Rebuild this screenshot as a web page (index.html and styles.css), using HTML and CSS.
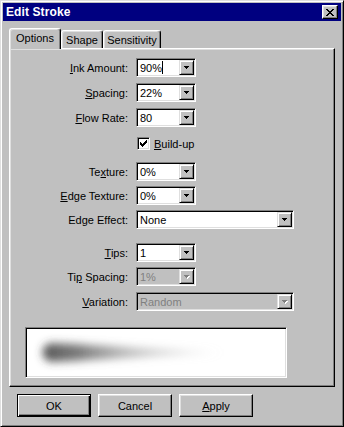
FILE: index.html
```html
<!DOCTYPE html>
<html>
<head>
<meta charset="utf-8">
<link rel="stylesheet" href="styles.css">
</head>
<body>
<div class="window">
  <div class="titlebar">
    <span class="title">Edit Stroke</span>
    <span class="close-btn">
      <svg width="8" height="7" viewBox="0 0 8 7" shape-rendering="crispEdges"><path d="M0 0h2v1H0zM6 0h2v1H6zM1 1h2v1H1zM5 1h2v1H5zM2 2h4v1H2zM3 3h2v1H3zM2 4h4v1H2zM1 5h2v1H1zM5 5h2v1H5zM0 6h2v1H0zM6 6h2v1H6z" fill="#000"/></svg>
    </span>
  </div>
  <div class="content">
    <div class="tabs">
      <div class="tab active tab-options">Options</div>
      <div class="tab tab-shape">Shape</div>
      <div class="tab tab-sens">Sensitivity</div>
    </div>
    <div class="panel">
      <div class="row">
        <label class="lbl"><u>I</u>nk Amount:</label>
        <div class="combo small"><span class="field">90%<span class="caret"></span></span><span class="drop"><svg class="arrow" width="5" height="3" viewBox="0 0 5 3" shape-rendering="crispEdges"><path d="M0 0h5v1H0zM1 1h3v1H1zM2 2h1v1H2z" fill="#000"/></svg></span></div>
      </div>
      <div class="row sp-6">
        <label class="lbl"><u>S</u>pacing:</label>
        <div class="combo small"><span class="field">22%</span><span class="drop"><svg class="arrow" width="5" height="3" viewBox="0 0 5 3" shape-rendering="crispEdges"><path d="M0 0h5v1H0zM1 1h3v1H1zM2 2h1v1H2z" fill="#000"/></svg></span></div>
      </div>
      <div class="row sp-6">
        <label class="lbl"><u>F</u>low Rate:</label>
        <div class="combo small"><span class="field">80</span><span class="drop"><svg class="arrow" width="5" height="3" viewBox="0 0 5 3" shape-rendering="crispEdges"><path d="M0 0h5v1H0zM1 1h3v1H1zM2 2h1v1H2z" fill="#000"/></svg></span></div>
      </div>
      <div class="row check-row sp-10">
        <span class="lbl"></span>
        <span class="checkbox"><svg width="7" height="7" viewBox="0 0 7 7" shape-rendering="crispEdges"><path d="M6 0h1v1H6zM5 1h2v1H5zM0 2h1v1H0zM4 2h3v1H4zM0 3h2v1H0zM3 3h3v1H3zM0 4h5v1H0zM1 5h3v1H1zM2 6h1v1H2z" fill="#000"/></svg></span>
        <span class="check-label"><u>B</u>uild-up</span>
      </div>
      <div class="row sp-12">
        <label class="lbl">Te<u>x</u>ture:</label>
        <div class="combo small"><span class="field">0%</span><span class="drop"><svg class="arrow" width="5" height="3" viewBox="0 0 5 3" shape-rendering="crispEdges"><path d="M0 0h5v1H0zM1 1h3v1H1zM2 2h1v1H2z" fill="#000"/></svg></span></div>
      </div>
      <div class="row sp-5">
        <label class="lbl"><u>E</u>dge Texture:</label>
        <div class="combo small"><span class="field">0%</span><span class="drop"><svg class="arrow" width="5" height="3" viewBox="0 0 5 3" shape-rendering="crispEdges"><path d="M0 0h5v1H0zM1 1h3v1H1zM2 2h1v1H2z" fill="#000"/></svg></span></div>
      </div>
      <div class="row sp-5">
        <label class="lbl">Ed<u>g</u>e Effect:</label>
        <div class="combo wide"><span class="field">None</span><span class="drop"><svg class="arrow" width="5" height="3" viewBox="0 0 5 3" shape-rendering="crispEdges"><path d="M0 0h5v1H0zM1 1h3v1H1zM2 2h1v1H2z" fill="#000"/></svg></span></div>
      </div>
      <div class="row sp-14">
        <label class="lbl"><u>T</u>ips:</label>
        <div class="combo small"><span class="field">1</span><span class="drop"><svg class="arrow" width="5" height="3" viewBox="0 0 5 3" shape-rendering="crispEdges"><path d="M0 0h5v1H0zM1 1h3v1H1zM2 2h1v1H2z" fill="#000"/></svg></span></div>
      </div>
      <div class="row sp-5">
        <label class="lbl">Ti<u>p</u> Spacing:</label>
        <div class="combo small disabled"><span class="field">1%</span><span class="drop"><svg class="arrow" width="5" height="3" viewBox="0 0 5 3" shape-rendering="crispEdges"><path d="M0 0h5v1H0zM1 1h3v1H1zM2 2h1v1H2z" fill="#808080"/></svg></span></div>
      </div>
      <div class="row sp-6">
        <label class="lbl"><u>V</u>ariation:</label>
        <div class="combo wide disabled"><span class="field">Random</span><span class="drop"><svg class="arrow" width="5" height="3" viewBox="0 0 5 3" shape-rendering="crispEdges"><path d="M0 0h5v1H0zM1 1h3v1H1zM2 2h1v1H2z" fill="#808080"/></svg></span></div>
      </div>
      <div class="preview">
        <svg width="258" height="47" viewBox="0 0 258 47">
          <defs>
            <linearGradient id="sg" x1="0" y1="0" x2="1" y2="0">
              <stop offset="0" stop-color="#3a3a3a" stop-opacity="0.85"/>
              <stop offset="0.2" stop-color="#505050" stop-opacity="0.75"/>
              <stop offset="0.5" stop-color="#8a8a8a" stop-opacity="0.5"/>
              <stop offset="0.8" stop-color="#b8b8b8" stop-opacity="0.3"/>
              <stop offset="1" stop-color="#d8d8d8" stop-opacity="0"/>
            </linearGradient>
            <filter id="bl" x="-20%" y="-80%" width="140%" height="260%">
              <feGaussianBlur stdDeviation="4"/>
            </filter>
          </defs>
          <path d="M24 13 C 70 15, 140 19.5, 200 22.5 C 140 25.5, 70 30, 24 32 A 9.5 9.5 0 0 1 24 13 Z" fill="url(#sg)" filter="url(#bl)"/>
        </svg>
      </div>
    </div>
    <div class="buttons">
      <div class="btn default">OK</div>
      <div class="btn">Cancel</div>
      <div class="btn"><u>A</u>pply</div>
    </div>
  </div>
</div>
</body>
</html>
```
FILE: styles.css
```css
* { box-sizing: border-box; margin: 0; padding: 0; }
body {
  margin: 0;
  background: #c0c0c0;
  font: 11px "Liberation Sans", Arial, sans-serif;
  color: #000;
}
u { text-decoration: underline; text-underline-offset: 1px; }

.window {
  width: 344px;
  height: 427px;
  background: #c0c0c0;
  border: 1px solid;
  border-color: #dfdfdf #000 #000 #dfdfdf;
  box-shadow: inset 1px 1px #fff, inset -1px -1px #808080;
  padding: 2px;
  display: flex;
  flex-direction: column;
}

.titlebar {
  height: 18px;
  flex: none;
  background: #000080;
  display: flex;
  align-items: center;
  justify-content: space-between;
  padding: 0 3px 0 3px;
}
.title {
  color: #fff;
  font-weight: bold;
  font-size: 12px;
  letter-spacing: 0.1px;
}
.close-btn {
  width: 16px;
  height: 14px;
  background: #c0c0c0;
  border: 1px solid;
  border-color: #fff #000 #000 #fff;
  box-shadow: inset -1px -1px #808080, inset 1px 1px #dfdfdf;
  display: flex;
  align-items: center;
  justify-content: center;
}
.close-btn svg { display: block; margin-left: -1px; }

.content {
  flex: 1;
  display: flex;
  flex-direction: column;
  padding: 7px 6px 0 6px;
}

.tabs {
  display: flex;
  align-items: flex-end;
  height: 20px;
  flex: none;
  position: relative;
  z-index: 1;
}
.tab {
  height: 18px;
  background: #c0c0c0;
  border: 1px solid;
  border-bottom: none;
  border-color: #fff #000 #000 #fff;
  border-radius: 3px 3px 0 0;
  box-shadow: inset -1px 0 #808080, inset 1px 1px #dfdfdf;
  display: flex;
  align-items: center;
  justify-content: center;
}
.tab.active {
  height: 21px;
  margin-bottom: -1px;
  padding-bottom: 2px;
}
.tab-options { width: 52px; }
.tab-shape { width: 42px; }
.tab-sens { width: 58px; }

.panel {
  height: 339px;
  flex: none;
  border: 1px solid;
  border-color: #fff #000 #000 #fff;
  box-shadow: inset -1px -1px #808080, inset 1px 1px #dfdfdf;
  padding: 9px 0 0 0;
  display: flex;
  flex-direction: column;
}

.row {
  display: flex;
  align-items: center;
  height: 19px;
}
.sp-5 { margin-top: 5px; }
.sp-6 { margin-top: 6px; }
.sp-10 { margin-top: 10px; }
.sp-12 { margin-top: 12px; }
.sp-14 { margin-top: 14px; }

.lbl {
  width: 118px;
  text-align: right;
  margin-right: 8px;
  flex: none;
  white-space: nowrap;
}

.combo {
  height: 19px;
  display: flex;
  background: #fff;
  border: 1px solid;
  border-color: #808080 #fff #fff #808080;
  box-shadow: inset 1px 1px #000, inset -1px -1px #dfdfdf;
  padding: 1px;
}
.combo.small { width: 60px; }
.combo.wide { width: 158px; }
.field {
  flex: 1;
  display: flex;
  align-items: center;
  padding-left: 2px;
  white-space: nowrap;
}
.caret {
  display: inline-block;
  width: 1px;
  height: 13px;
  background: #000;
  margin-left: 0;
}
.drop {
  width: 15px;
  flex: none;
  background: #c0c0c0;
  border: 1px solid;
  border-color: #dfdfdf #000 #000 #dfdfdf;
  box-shadow: inset 1px 1px #fff, inset -1px -1px #808080;
  display: flex;
  align-items: center;
  justify-content: center;
}
.drop .arrow { display: block; }
.combo.disabled { background: #c0c0c0; }
.combo.disabled .field { color: #808080; }
.combo.disabled .arrow { filter: drop-shadow(1px 1px 0 #fff); }

.check-row { height: 13px; }
.checkbox {
  width: 13px;
  height: 13px;
  margin-left: 1px;
  background: #fff;
  border: 1px solid;
  border-color: #808080 #fff #fff #808080;
  box-shadow: inset 1px 1px #000, inset -1px -1px #dfdfdf;
  display: flex;
  align-items: center;
  justify-content: center;
}
.checkbox svg { display: block; }
.check-label { margin-left: 4px; }

.preview {
  margin-top: 16px;
  margin-left: 15px;
  width: 262px;
  height: 51px;
  background: #fff;
  border: 1px solid;
  border-color: #808080 #fff #fff #808080;
  box-shadow: inset 1px 1px #000, inset -1px -1px #dfdfdf;
  padding: 2px;
}
.preview svg { display: block; }

.buttons {
  display: flex;
  gap: 7px;
  margin-top: 7px;
  padding-left: 8px;
}
.btn {
  width: 74px;
  height: 23px;
  background: #c0c0c0;
  border: 1px solid;
  border-color: #fff #000 #000 #fff;
  box-shadow: inset -1px -1px #808080, inset 1px 1px #dfdfdf;
  display: flex;
  align-items: center;
  justify-content: center;
}
.btn.default {
  border-color: #000;
  box-shadow: inset 1px 1px #fff, inset -1px -1px #000, inset -2px -2px #808080;
}
```
